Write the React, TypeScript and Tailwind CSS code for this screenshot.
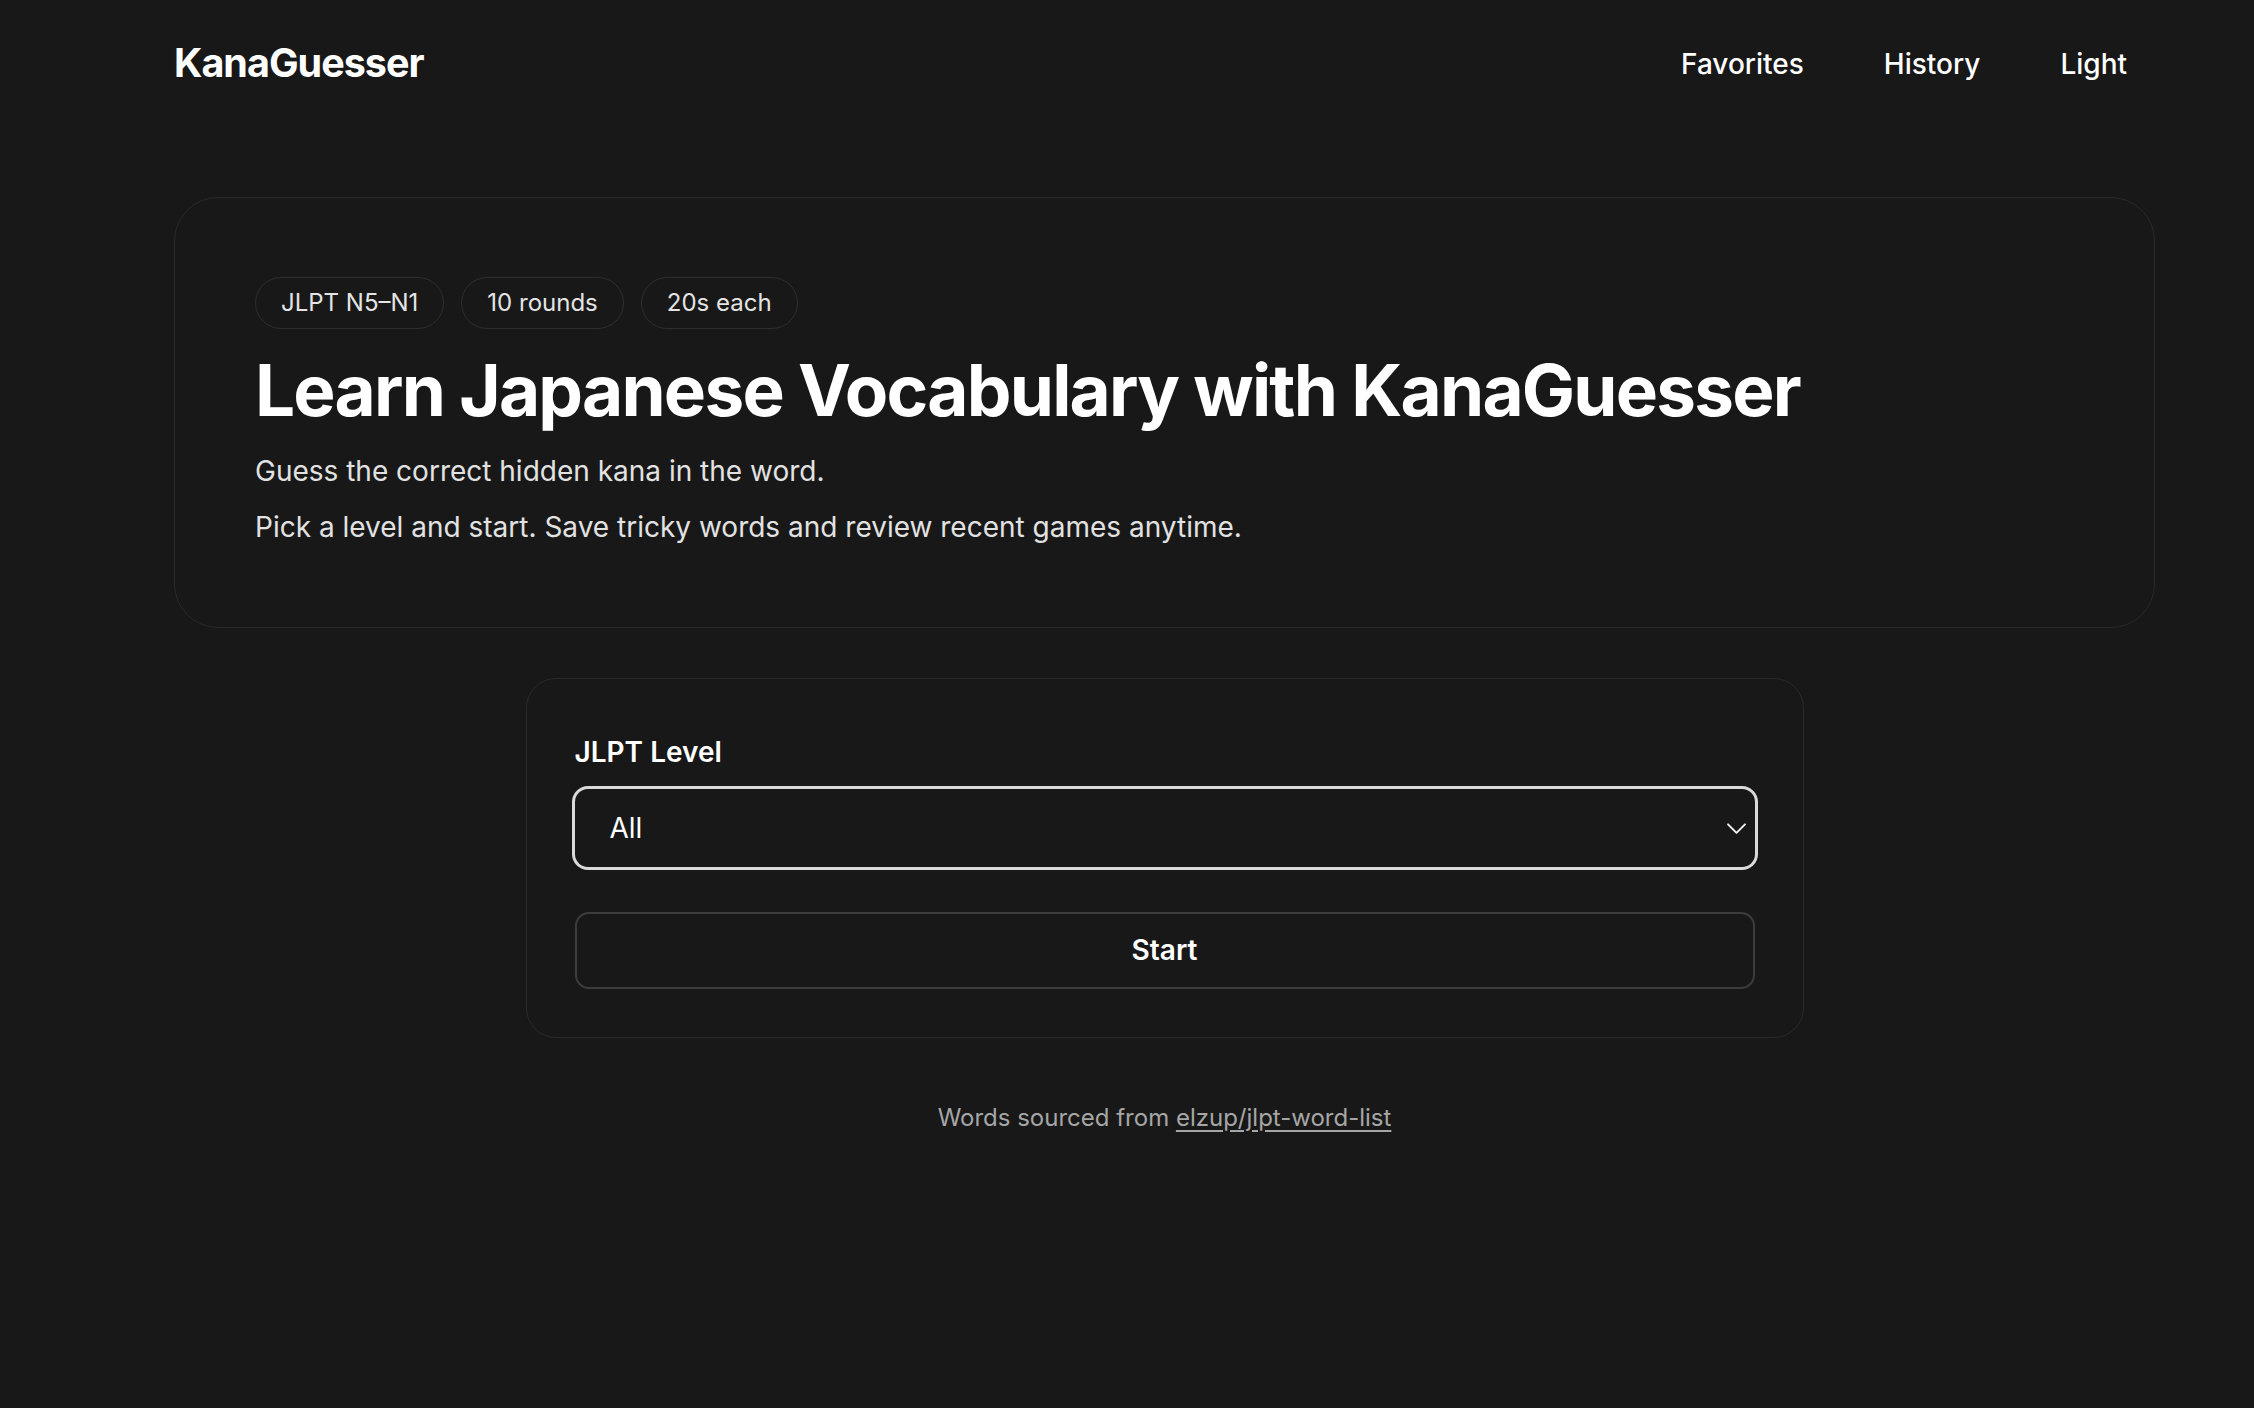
import React from "react";

function Chip({ children }: { children: React.ReactNode }) {
  return (
    <span className="inline-flex h-[52px] items-center rounded-full border border-[#2e2e2e] px-[25px] text-[24px] text-[#e4e4e4]">
      {children}
    </span>
  );
}

export default function App() {
  return (
    <div className="min-h-screen bg-[#181818] font-['Inter',sans-serif] text-white">
      <div className="ml-[174px] w-[1981px] pb-[200px]">
        <header className="flex h-[126px] items-center justify-between">
          <div className="pt-[2px] text-[39.5px] font-bold tracking-tight text-white">KanaGuesser</div>
          <nav className="flex items-center gap-[24px] pt-[2px]">
            <button className="px-[28px] text-[28px] font-medium text-white">Favorites</button>
            <button className="px-[28px] text-[28px] font-medium text-white">History</button>
            <button className="px-[28px] text-[28px] font-medium text-white">Light</button>
          </nav>
        </header>

        <section className="mt-[71px] rounded-[44px] border border-[#2a2a2a] bg-[#181818] px-[80px] pb-[80px] pt-[79px]">
          <div className="flex gap-[17px]">
            <Chip>JLPT N5–N1</Chip>
            <Chip>10 rounds</Chip>
            <Chip>20s each</Chip>
          </div>
          <h1 className="mt-[21px] text-[71px] font-bold leading-[1.15] tracking-tight text-white">
            Learn Japanese Vocabulary with KanaGuesser
          </h1>
          <p className="mt-[19px] text-[28px] leading-[40px] text-[#e2e2e2]">Guess the correct hidden kana in the word.</p>
          <p className="mt-[16px] text-[28px] leading-[40px] text-[#e2e2e2]">
            Pick a level and start. Save tricky words and review recent games anytime.
          </p>
        </section>

        <section className="mx-auto mt-[50px] w-[1278px] rounded-[30px] border border-[#2a2a2a] px-[48px] pb-[48px] pt-[48px]">
          <label className="block text-[28px] font-semibold leading-[50px] text-white">JLPT Level</label>
          <div className="relative mt-[12px]">
            <div className="flex h-[78px] items-center rounded-[13px] bg-[#181818] px-[35px] text-[28px] text-white ring-[3px] ring-[#dadada]">
              All
            </div>
            <svg
              className="absolute right-[4px] top-1/2 h-[29px] w-[29px] -translate-y-1/2"
              viewBox="0 0 24 24"
              fill="none"
              stroke="#f2f2f2"
              strokeWidth="1.6"
              strokeLinecap="round"
              strokeLinejoin="round"
            >
              <path d="M5 9l7 7 7-7" />
            </svg>
          </div>
          <button className="mt-[45px] flex h-[77px] w-full items-center justify-center rounded-[14px] border-2 border-[#3c3c3c] text-[28px] font-semibold text-white">
            Start
          </button>
        </section>

        <p className="mt-[62px] text-center text-[24px] text-[#a6a6a6]">
          Words sourced from <a className="underline underline-offset-4">elzup/jlpt-word-list</a>
        </p>
      </div>
    </div>
  );
}
